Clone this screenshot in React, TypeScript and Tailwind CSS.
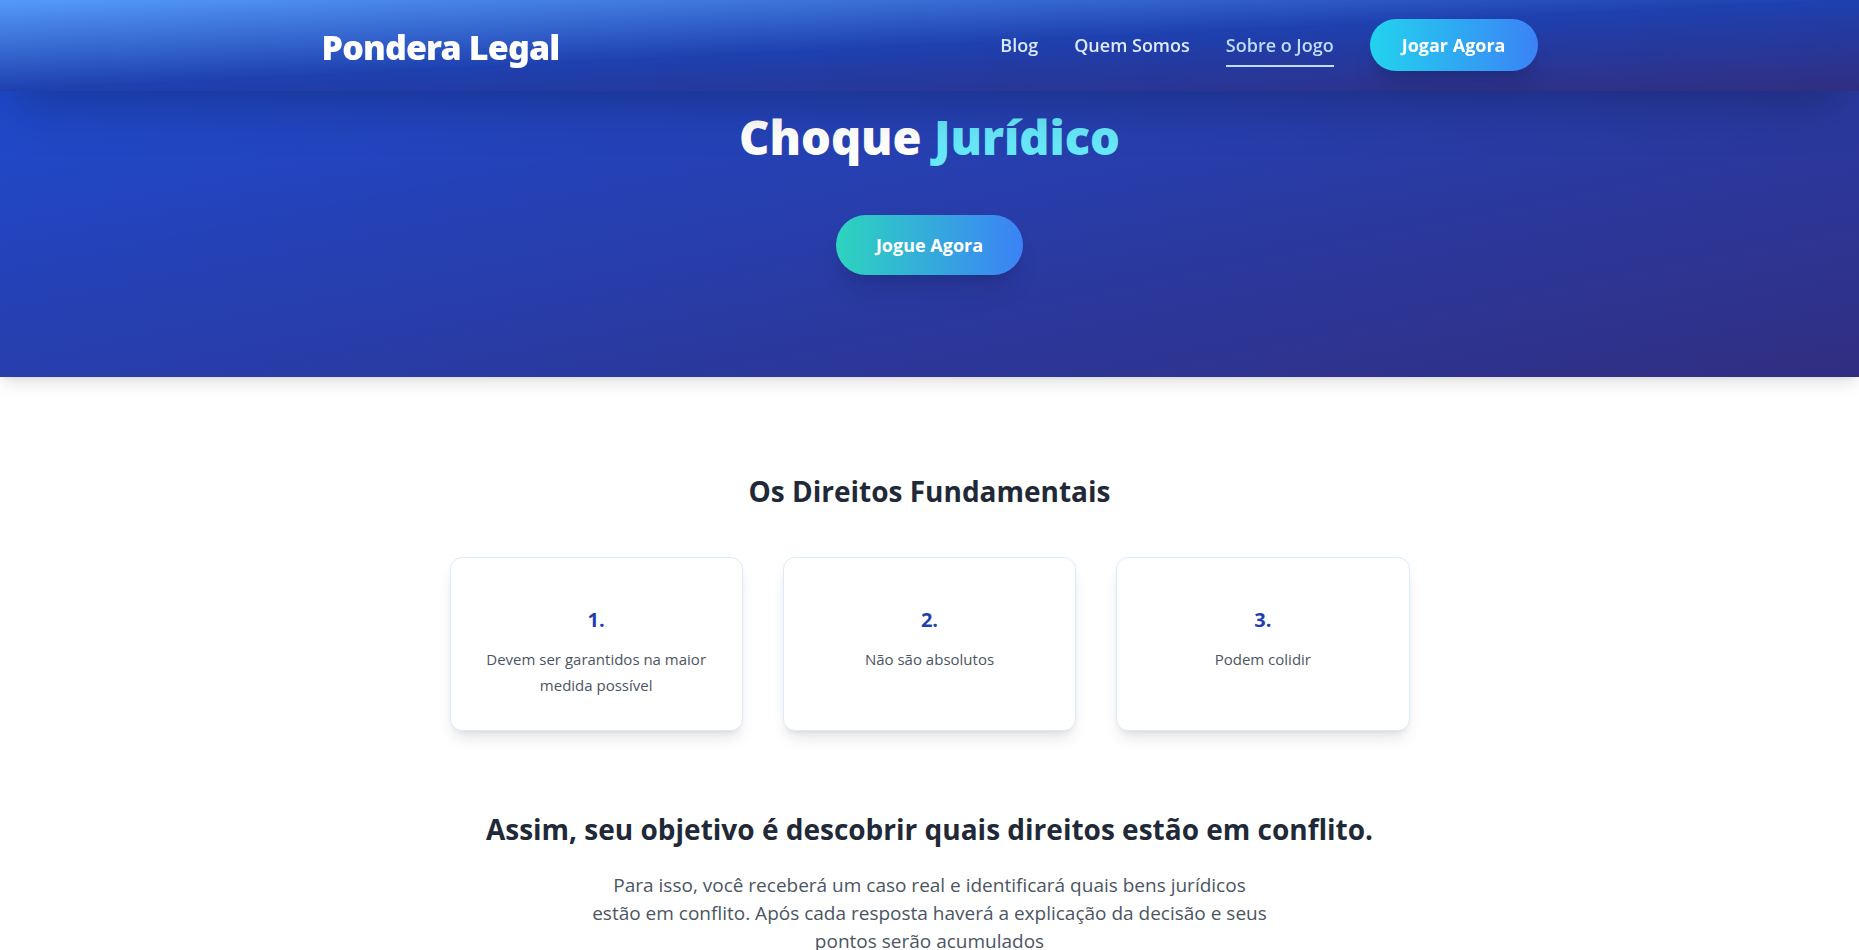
const navLinks = [
  { label: "Blog", active: false },
  { label: "Quem Somos", active: false },
  { label: "Sobre o Jogo", active: true },
];

const rights = [
  { title: "1.", text: "Devem ser garantidos na maior medida possível" },
  { title: "2.", text: "Não são absolutos" },
  { title: "3.", text: "Podem colidir" },
];

function Header() {
  return (
    <header className="fixed inset-x-0 top-0 z-10 bg-linear-to-br/srgb from-[#559bfb] via-[#1e40af] to-[#312e81] shadow-2xl">
      <div className="mx-auto flex max-w-7xl items-center justify-between px-8 pt-[19px] pb-5">
        <a
          href="#"
          className="pt-1 font-['Noto_Sans','Open_Sans',sans-serif] text-[34px] leading-[48px] font-black tracking-tight text-white"
        >
          Pondera Legal
        </a>
        <nav className="flex items-center gap-9 text-lg">
          {navLinks.map((link) => (
            <a
              key={link.label}
              href="#"
              className={
                link.active
                  ? "border-b-2 border-[#bfdbfe] pt-2 pb-1.5 font-semibold text-[#bfdbfe]"
                  : "border-b-2 border-transparent pt-2 pb-1.5 font-semibold text-[#dbeafe]"
              }
            >
              {link.label}
            </a>
          ))}
          <button
            type="button"
            className="rounded-full bg-linear-to-r/srgb from-[#22d3ee] to-[#3b82f6] px-8 py-3 font-bold text-white shadow-xl"
          >
            Jogar Agora
          </button>
        </nav>
      </div>
    </header>
  );
}

function Hero() {
  return (
    <section className="flex flex-col items-center bg-linear-to-br/srgb from-[#1d4ed8] to-[#312e81] pt-[107px] pb-[102px] shadow-lg">
      <h1 className="font-['Noto_Sans','Open_Sans',sans-serif] text-[47px] leading-[60px] font-black text-white">
        Choque <span className="text-[#67e8f9]">Jurídico</span>
      </h1>
      <button
        type="button"
        className="mt-12 rounded-full bg-linear-to-r/srgb from-[#2dd4bf] to-[#3b82f6] px-10 py-4 text-lg font-bold text-white shadow-xl"
      >
        Jogue Agora
      </button>
    </section>
  );
}

export default function App() {
  return (
    <div className="min-h-screen bg-white font-['Open_Sans',sans-serif]">
      <Header />
      <Hero />
      <main className="mx-auto max-w-5xl px-8 py-24 text-center">
        <h2 className="text-[28px] leading-9 font-bold text-[#1f2937]">Os Direitos Fundamentais</h2>
        <div className="mt-12 grid grid-cols-3 gap-10">
          {rights.map((right) => (
            <article
              key={right.title}
              className="rounded-xl border border-[#dbeafe] bg-white px-8 pt-12 pb-8 shadow-lg"
            >
              <h3 className="text-xl font-bold text-[#1e40af]">{right.title}</h3>
              <p className="mt-3 text-[15px] leading-[26px] text-[#4b5563]">{right.text}</p>
            </article>
          ))}
        </div>
        <h2 className="mt-20 text-[28px] leading-9 font-bold text-[#1f2937]">
          Assim, seu objetivo é descobrir quais direitos estão em conflito.
        </h2>
        <p className="mx-auto mt-6 max-w-[700px] text-[19px] leading-7 text-[#4b5563]">
          Para isso, você receberá um caso real e identificará quais bens jurídicos
          <br />
          estão em conflito. Após cada resposta haverá a explicação da decisão e seus
          <br />
          pontos serão acumulados
        </p>
      </main>
    </div>
  );
}
